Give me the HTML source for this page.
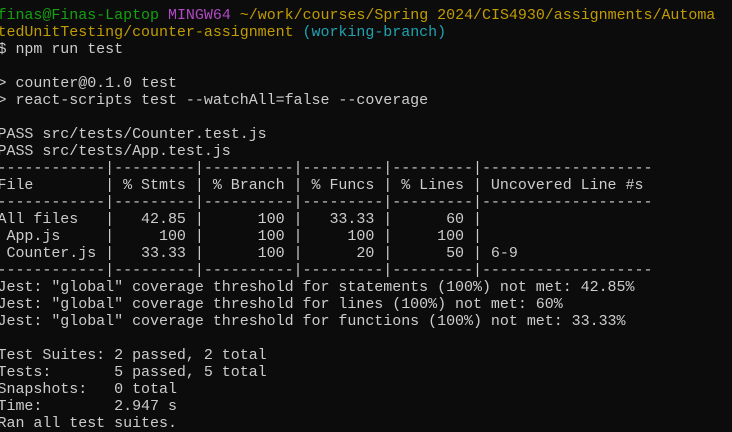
<!DOCTYPE html>
<html><head><meta charset="utf-8"><style>
html,body{margin:0;padding:0;background:#0c0c0c;width:732px;height:427px;overflow:hidden}
pre{position:absolute;left:-2.5px;top:7px;margin:0;font-family:"Liberation Mono",monospace;font-size:15px;line-height:16.98px;color:#cccccc;letter-spacing:-0.03px}
.g{color:#13a10e}.m{color:#b148c6}.y{color:#c19c00}.c{color:#1fa2b0}
</style></head><body>
<pre><span class="g">finas@Finas-Laptop</span> <span class="m">MINGW64</span> <span class="y">~/work/courses/Spring 2024/CIS4930/assignments/Automa
tedUnitTesting/counter-assignment</span> <span class="c">(working-branch)</span>
$ npm run test

&gt; counter@0.1.0 test
&gt; react-scripts test --watchAll=false --coverage

PASS src/tests/Counter.test.js
PASS src/tests/App.test.js
------------|---------|----------|---------|---------|-------------------
File        | % Stmts | % Branch | % Funcs | % Lines | Uncovered Line #s
------------|---------|----------|---------|---------|-------------------
All files   |   42.85 |      100 |   33.33 |      60 |
 App.js     |     100 |      100 |     100 |     100 |
 Counter.js |   33.33 |      100 |      20 |      50 | 6-9
------------|---------|----------|---------|---------|-------------------
Jest: "global" coverage threshold for statements (100%) not met: 42.85%
Jest: "global" coverage threshold for lines (100%) not met: 60%
Jest: "global" coverage threshold for functions (100%) not met: 33.33%

Test Suites: 2 passed, 2 total
Tests:       5 passed, 5 total
Snapshots:   0 total
Time:        2.947 s
Ran all test suites.</pre>
</body></html>
